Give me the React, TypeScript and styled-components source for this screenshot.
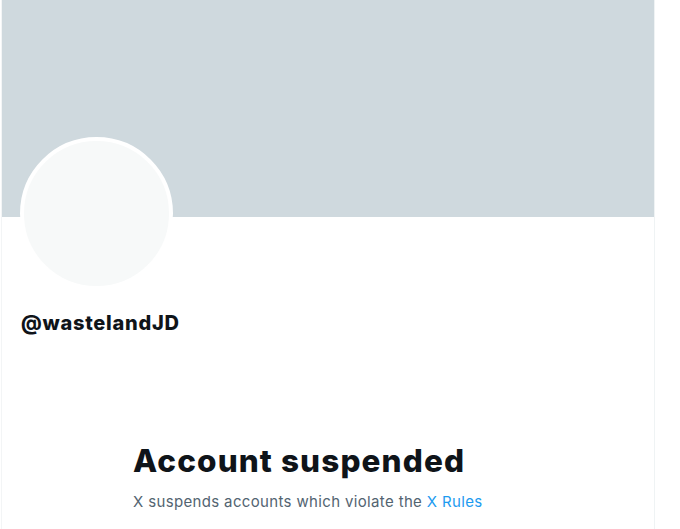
import React from "react";
import styled, { createGlobalStyle } from "styled-components";

const Global = createGlobalStyle`
  html, body { margin: 0; padding: 0; background: #ffffff; }
  body { font-family: Inter, "Noto Sans", "Liberation Sans", sans-serif; color: #0f1419; }
`;

const Column = styled.main`
  margin-left: 1px;
  width: 652px;
  min-height: 529px;
  border-left: 1px solid #f3f5f6;
  border-right: 1px solid #eff3f4;
  display: flex;
  flex-direction: column;
`;

const Banner = styled.div`
  height: 217px;
  background: #cfd9de;
`;

const Header = styled.section`
  padding: 0 18px;
  display: flex;
  flex-direction: column;
`;

const Avatar = styled.div`
  margin-top: -80px;
  width: 145px;
  height: 145px;
  border-radius: 50%;
  border: 4px solid #ffffff;
  background: #f7f9f9;
`;

const Handle = styled.h2`
  margin: 21px 0 0 1px;
  font-size: 20px;
  line-height: 24px;
  font-weight: 800;
  color: #0f1419;
  letter-spacing: 0.75px;
`;

const Empty = styled.section`
  width: 390px;
  margin: 108px auto 0;
  display: flex;
  flex-direction: column;
`;

const Title = styled.h1`
  margin: 0;
  font-size: 31.5px;
  line-height: 36px;
  font-weight: 800;
  color: #0f1419;
  letter-spacing: 1.1px;
  white-space: nowrap;
`;

const Sub = styled.p`
  margin: 13px 0 0;
  font-size: 15px;
  line-height: 20px;
  color: #536471;
  letter-spacing: 0.35px;
  white-space: nowrap;
`;

const RulesLink = styled.a`
  color: #1d9bf0;
  text-decoration: none;
`;

export default function App() {
  return (
    <>
      <Global />
      <Column>
        <Banner />
        <Header>
          <Avatar />
          <Handle>@wastelandJD</Handle>
        </Header>
        <Empty>
          <Title>Account suspended</Title>
          <Sub>
            X suspends accounts which violate the <RulesLink href="#">X Rules</RulesLink>
          </Sub>
        </Empty>
      </Column>
    </>
  );
}
